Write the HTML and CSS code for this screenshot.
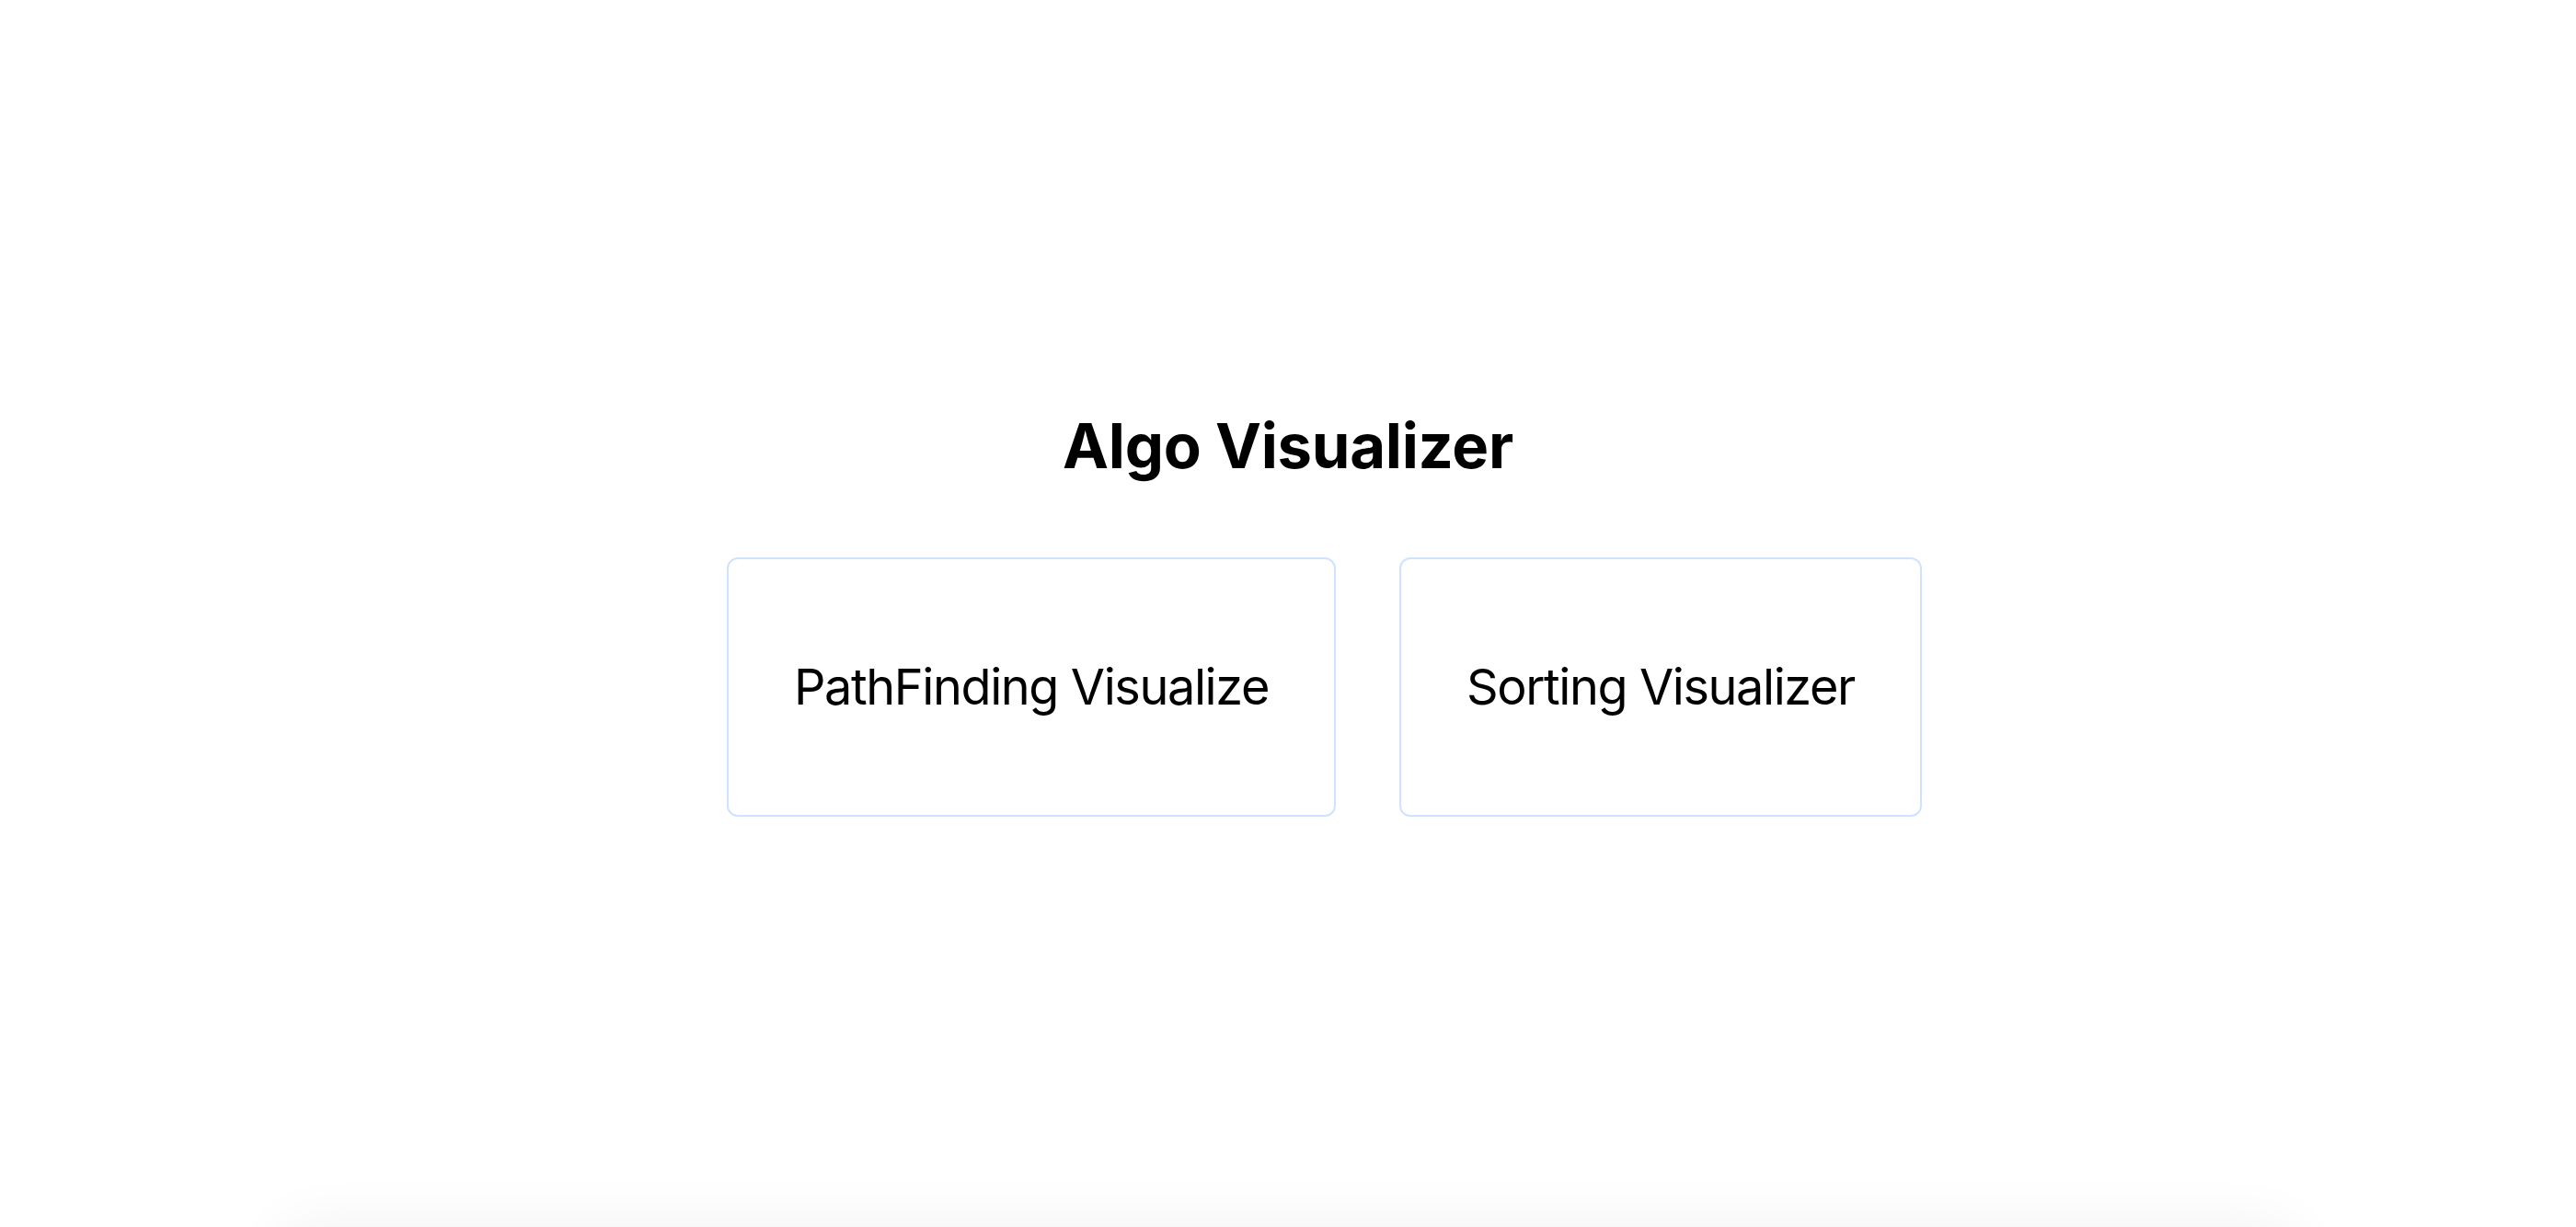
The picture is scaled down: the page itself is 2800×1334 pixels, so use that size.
FILE: index.html
```html
<!DOCTYPE html>
<html lang="en">
<head>
<meta charset="utf-8">
<title>Algo Visualizer</title>
<link rel="stylesheet" href="styles.css">
</head>
<body>
  <main class="home">
    <h1 class="home-title">Algo Visualizer</h1>
    <div class="card-row">
      <a class="vis-card vis-card--path" href="#">PathFinding Visualize</a>
      <a class="vis-card vis-card--sort" href="#">Sorting Visualizer</a>
    </div>
  </main>
  <div class="below-fold"></div>
</body>
</html>
```

FILE: styles.css
```css
html, body {
  margin: 0;
  padding: 0;
  background: #ffffff;
  overflow: hidden;
}

body {
  font-family: Inter, "Noto Sans", "Liberation Sans", sans-serif;
  color: #000000;
}

.home {
  height: 1334px;
  box-sizing: border-box;
  padding-top: 445px;
  display: flex;
  flex-direction: column;
  align-items: center;
}

.home-title {
  margin: 0 0 81px 0;
  font-size: 67px;
  line-height: 80px;
  font-weight: 700;
  letter-spacing: -0.3px;
}

.card-row {
  display: flex;
  justify-content: center;
  gap: 69px;
  padding-left: 79px;
}

.vis-card {
  display: flex;
  align-items: center;
  justify-content: center;
  box-sizing: border-box;
  height: 282px;
  padding: 0 40px;
  border: 2px solid #cfe2ff;
  border-radius: 12px;
  font-size: 54px;
  line-height: 64px;
  font-weight: 400;
  letter-spacing: -1.4px;
  color: #000000;
  text-decoration: none;
  white-space: nowrap;
}

.vis-card--path {
  width: 662px;
}

.vis-card--sort {
  width: 568px;
}

.below-fold {
  width: 2200px;
  height: 400px;
  margin: 0 auto;
  border-radius: 40px;
  background: #ffffff;
  box-shadow: 0 -6px 60px rgba(0, 0, 0, 0.05);
}
```
